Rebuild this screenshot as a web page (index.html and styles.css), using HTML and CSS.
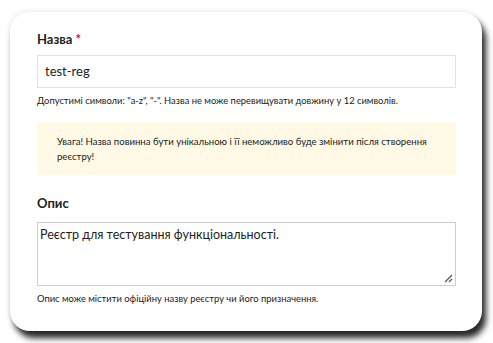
FILE: index.html
```html
<!DOCTYPE html>
<html lang="uk">
<head>
<meta charset="utf-8">
<link rel="stylesheet" href="styles.css">
</head>
<body>
<div class="page">
  <form class="card">
    <div class="field">
      <label class="label">Назва <span class="req">*</span></label>
      <div class="input">test-reg</div>
      <p class="hint">Допустимі символи: "a-z", "-". Назва не може перевищувати довжину у 12 символів.</p>
    </div>
    <div class="warning">Увага! Назва повинна бути унікальною і її неможливо буде змінити після створення реєстру!</div>
    <div class="field">
      <label class="label">Опис</label>
      <div class="textarea">Реєстр для тестування функціональності.
        <svg class="grip" width="10" height="10" viewBox="0 0 10 10"><path d="M9 2 L2 9 M9 6 L6 9" stroke="#555" stroke-width="1.2" fill="none"/></svg>
      </div>
      <p class="hint">Опис може містити офіційну назву реєстру чи його призначення.</p>
    </div>
  </form>
</div>
</body>
</html>
```
FILE: styles.css
```css
* { box-sizing: border-box; }
html, body { margin: 0; padding: 0; background: #fff; }
body { font-family: "Lato", "Noto Sans", sans-serif; color: #1d1d1f; }
.page { padding: 12px 11px 12px 10px; }
.card {
  width: 472px;
  height: 319px;
  background: #fff;
  border-radius: 20px;
  box-shadow: 4px 7px 6px rgba(0,0,0,0.85), -1px -1px 6px rgba(0,0,0,0.08);
  padding: 19px 26px 0 27px;
  display: flex;
  flex-direction: column;
}
.label { display: block; font-size: 13px; font-weight: 700; line-height: 16px; color: #222; }
.req { color: #e4002b; }
.input {
  margin-top: 8px;
  height: 33px;
  border: 1px solid #e0e0e6;
  padding: 0 7px;
  font-size: 13px;
  line-height: 31px;
}
.hint { margin: 6px 0 0; font-size: 9.4px; line-height: 13px; color: #222; }
.warning {
  margin-top: 15px;
  background: #fff9e6;
  padding: 12px 20px;
  font-size: 9.6px;
  line-height: 15px;
  color: #222;
  height: 53px;
  margin-bottom: 20px;
}
.textarea {
  position: relative;
  margin-top: 11px;
  height: 64px;
  border: 1px solid #cfcbdc;
  padding: 3px 2px;
  font-size: 12.5px;
  line-height: 18px;
}
.grip { position: absolute; right: 2px; bottom: 2px; }
```
